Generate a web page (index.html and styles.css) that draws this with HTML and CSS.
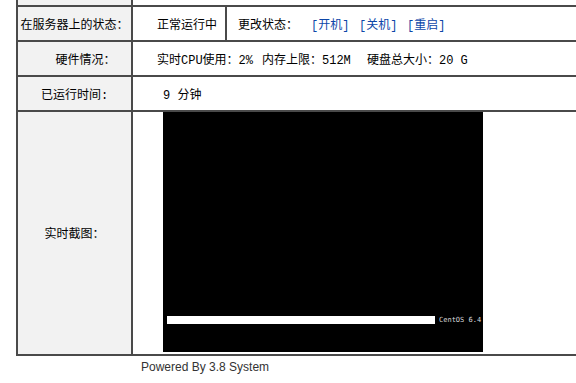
FILE: index.html
```html
<!DOCTYPE html>
<html lang="zh-CN">
<head>
  <meta charset="utf-8" />
  <title>VPS 状态</title>
  <link rel="stylesheet" href="styles.css">
</head>
<body>
  <div class="sheet">
    <div class="cell label"></div>
    <div class="cell value"></div>

    <div class="cell label">在服务器上的状态：</div>
    <div class="cell value split">
      <div class="status-now">正常运行中</div>
      <div class="status-change">
        <span class="change-title">更改状态：</span>
        <a class="action" href="#">[开机]</a>
        <a class="action" href="#">[关机]</a>
        <a class="action" href="#">[重启]</a>
      </div>
    </div>

    <div class="cell label label-shift">硬件情况：</div>
    <div class="cell value">
      <span class="spec">实时CPU使用：2%</span>
      <span class="spec">内存上限：512M</span>
      <span class="spec">硬盘总大小：20 G</span>
    </div>

    <div class="cell label">已运行时间:</div>
    <div class="cell value wide">9 分钟</div>

    <div class="cell label">实时截图：</div>
    <div class="cell value wide top">
      <div class="screen">
        <div class="boot-row">
          <div class="boot-bar"></div>
          <span class="boot-text">CentOS 6.4</span>
        </div>
      </div>
    </div>
  </div>

  <div class="footer">Powered By 3.8 System</div>
</body>
</html>
```

FILE: styles.css
```css
*, *::before, *::after {
  box-sizing: border-box;
}

body {
  margin: 0;
  background: white;
  color: black;
  font-family: "Liberation Mono", "Noto Sans CJK SC", monospace;
  font-size: 12px;
  overflow: hidden;
}

.sheet {
  display: grid;
  grid-template-columns: 115px 1fr;
  grid-template-rows: 35px 35px 35px 35px 244px;
  width: 600px;
  margin: -28px 0 0 16px;
  border-left: 2px solid #4a4a4a;
}

.cell {
  display: flex;
  align-items: center;
  border-right: 2px solid #4a4a4a;
  border-bottom: 2px solid #4a4a4a;
  white-space: nowrap;
}

.label {
  justify-content: center;
  background-color: #f2f2f2;
}

.label-shift {
  padding-left: 22px;
}

.value {
  padding-left: 24px;
}

.value.wide {
  padding-left: 30px;
}

.value.split {
  padding-left: 0;
}

.top {
  align-items: flex-start;
}

.status-now {
  display: flex;
  align-items: center;
  width: 94px;
  height: 100%;
  padding-left: 24px;
  border-right: 2px solid #4a4a4a;
}

.status-change {
  display: flex;
  align-items: center;
  padding-left: 11px;
}

.change-title {
  width: 73px;
}

.action {
  display: inline-block;
  width: 48px;
  color: #0d46a8;
  text-decoration: none;
}

.spec {
  display: inline-block;
  width: 105px;
}

.screen {
  width: 320px;
  height: 240px;
  background: black;
}

.boot-row {
  display: flex;
  align-items: center;
  margin-top: 204px;
  padding-left: 4px;
}

.boot-bar {
  width: 268px;
  height: 8px;
  background: white;
}

.boot-text {
  margin-left: 4px;
  font-family: "DejaVu Sans Mono", monospace;
  font-size: 7px;
  color: #d8d8d8;
}

.footer {
  margin: 4px 0 0 141px;
  font-family: "Liberation Sans", Arial, sans-serif;
  font-size: 12px;
  color: #333;
}
```
